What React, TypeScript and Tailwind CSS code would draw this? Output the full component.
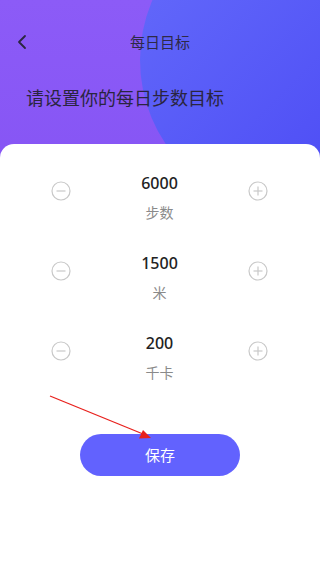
import React from 'react';

const goals = [
  { value: '6000', label: '步数' },
  { value: '1500', label: '米' },
  { value: '200', label: '千卡' },
];

const CircleButton: React.FC<{ plus?: boolean }> = ({ plus }) => (
  <button className="w-[20px] h-[20px] mt-[10px] flex items-center justify-center">
    <svg width="20" height="20" viewBox="0 0 20 20" fill="none" stroke="#c8c8c8" strokeWidth="1.2">
      <circle cx="10" cy="10" r="9" />
      <line x1="5.5" y1="10" x2="14.5" y2="10" />
      {plus && <line x1="10" y1="5.5" x2="10" y2="14.5" />}
    </svg>
  </button>
);

export default function App() {
  return (
    <div
      className="relative w-[320px] h-[568px] overflow-hidden bg-gradient-to-b from-[#8c5bf7] to-[#7a46ef]"
      style={{ fontFamily: '"Noto Sans", "Noto Sans CJK SC", sans-serif' }}
    >
      {/* decorative circle */}
      <div className="absolute left-[140px] top-[-90px] w-[300px] h-[300px] rounded-full bg-gradient-to-br from-[#666cfb] to-[#4842f3]" />

      <div className="relative">
        {/* Nav */}
        <div className="h-[32px] mt-[26px] flex items-center relative">
          <svg className="absolute left-[16px]" width="14" height="16" viewBox="0 0 14 16" fill="none" stroke="#2b2640" strokeWidth="1.8" strokeLinecap="round" strokeLinejoin="round">
            <polyline points="9,2 3,8 9,14" />
          </svg>
          <div className="w-full text-center text-[15px] text-[#2e2a48]">每日目标</div>
        </div>

        <div className="mt-[28px] pl-[26px] text-[18px] leading-[24px] text-[#2a2540]">请设置你的每日步数目标</div>

        {/* Card */}
        <div className="mt-[34px] h-[424px] bg-white rounded-t-[14px] pt-[27px] flex flex-col">
          <div className="flex flex-col gap-[28px]">
            {goals.map((g) => (
              <div key={g.label} className="flex items-start justify-between pl-[51px] pr-[52px]">
                <CircleButton />
                <div className="flex flex-col items-center">
                  <div className="text-[16px] leading-[24px] font-medium text-[#222]">{g.value}</div>
                  <div className="mt-[8px] text-[14px] leading-[20px] text-[#8a8a8a]">{g.label}</div>
                </div>
                <CircleButton plus />
              </div>
            ))}
          </div>

          <div className="mt-[51px] flex justify-center">
            <button className="w-[160px] h-[42px] rounded-full bg-[#6262fe] text-white text-[15px]">保存</button>
          </div>
        </div>
      </div>

      {/* red annotation arrow */}
      <svg className="absolute left-0 top-0 pointer-events-none" width="320" height="568">
        <line x1="50" y1="396" x2="143" y2="434" stroke="#e8201c" strokeWidth="1.3" />
        <polygon points="151,438 139,438.5 143,430" fill="#e8201c" />
      </svg>
    </div>
  );
}
